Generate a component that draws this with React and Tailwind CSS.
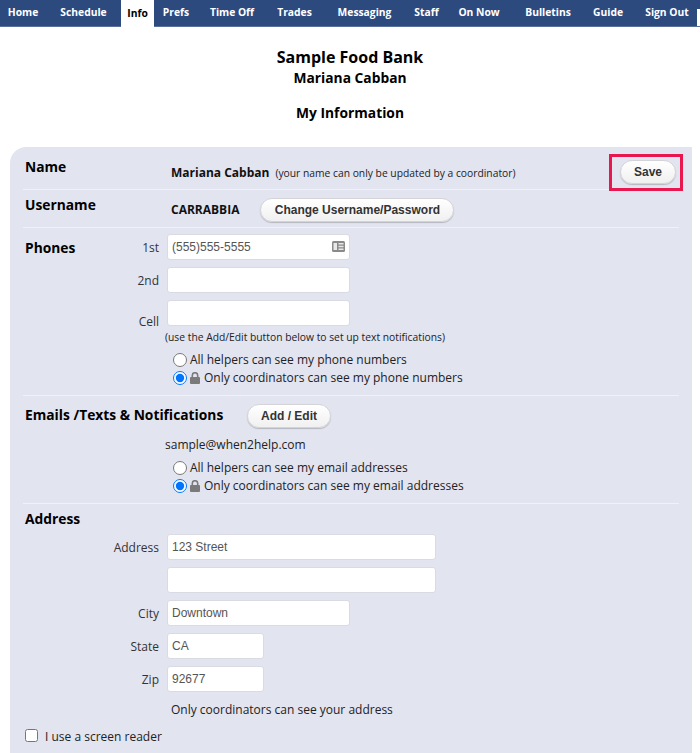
import React from "react";

const NAV = [
  ["Home", "w-[46px]"], ["Schedule", "w-[75px]"], ["Info", "w-[33px]"], ["Prefs", "w-[44px]"], ["Time Off", "w-[68px]"],
  ["Trades", "w-[57px]"], ["Messaging", "w-[83px]"], ["Staff", "w-[41px]"], ["On Now", "w-[64px]"], ["Bulletins", "w-[74px]"],
  ["Guide", "w-[46px]"], ["Sign Out", "w-[66px] pl-[6px]"],
];

function Btn({ children, className = "" }) {
  return (
    <span className={"inline-flex items-center justify-center h-6 rounded-full border border-[#d4d4d8] bg-gradient-to-b from-white to-[#f0f0f0] shadow-[0_1px_1px_rgba(0,0,0,0.2)] font-['Liberation_Sans',sans-serif] font-bold text-[12px] text-[#333] " + className}>
      {children}
    </span>
  );
}

function Field({ label, value, w, icon, labelClass = "pt-[1px]" }) {
  return (
    <div className="flex items-center h-[26px] mb-[7px]">
      <div className={"w-[144px] text-right pr-[8px] text-[#333] " + labelClass}>{label}</div>
      <div className={"relative h-[26px] rounded-[3px] bg-white border border-[#d9dae2] pl-[4px] flex items-center font-['Liberation_Sans',sans-serif] text-[12px] text-[#555] " + w}>
        {value}
        {icon && (
          <svg className="absolute right-[4px] top-[6px]" width="13" height="11" viewBox="0 0 13 11">
            <rect x="0" y="0" width="13" height="11" rx="1.5" fill="#8a8a8a" />
            <rect x="1.5" y="2" width="3.5" height="7" fill="#e8e8e8" />
            <rect x="6.5" y="2" width="5" height="1.5" fill="#e8e8e8" />
            <rect x="6.5" y="4.75" width="5" height="1.5" fill="#e8e8e8" />
            <rect x="6.5" y="7.5" width="5" height="1.5" fill="#e8e8e8" />
          </svg>
        )}
      </div>
    </div>
  );
}

function Lock() {
  return (
    <svg className="ml-[3px] mr-[4px] mb-[1px] shrink-0" width="10" height="12" viewBox="0 0 10 12">
      <path d="M2.3 6V3.4a2.7 2.7 0 0 1 5.4 0V6" fill="none" stroke="#7a7a7a" strokeWidth="1.6" />
      <rect x="0" y="5" width="10" height="7" rx="1" fill="#7a7a7a" />
    </svg>
  );
}

function Radios({ name, noun }) {
  return (
    <div className="ml-[150px]">
      <label className="flex items-center h-[18px]">
        <input type="radio" name={name} className="w-[14px] h-[14px] m-0" />
        <span className="ml-[3px]">All helpers can see my {noun}</span>
      </label>
      <label className="flex items-center h-[18px]">
        <input type="radio" name={name} defaultChecked className="w-[14px] h-[14px] m-0" />
        <span className="flex items-center"><Lock /> Only coordinators can see my {noun}</span>
      </label>
    </div>
  );
}

export default function App() {
  return (
    <div className="h-[753px] overflow-hidden bg-white font-['Open_Sans',sans-serif] text-[12px] text-[#222]">
      <nav className="relative flex h-[27px] bg-[#2d4a7f] pl-0 border-b border-[#5a7099]">
        {NAV.map(([t, w]) => (
          <div key={t} className={"h-[26px] flex items-center justify-center text-[10.3px] font-bold " + w + (t === "Info" ? " bg-white text-black h-[27px]" : " text-white")}>
            {t}
          </div>
        ))}
      </nav>

      <header className="text-center text-black font-bold pt-[19px]">
        <div className="text-[16px] leading-[22px]">Sample Food Bank</div>
        <div className="text-[13.8px] leading-[19px]">Mariana Cabban</div>
        <div className="text-[13.8px] leading-[19px] mt-[16px]">My Information</div>
      </header>

      <main className="relative ml-[10px] mr-[8px] mt-[25px] bg-[#e2e4f0] rounded-tl-[16px] pl-[13px] pr-[13px] pb-[20px]">
        <section className="relative h-[43px] border-b border-[#f1f2f8]">
          <div className="absolute left-[2px] top-[10px] font-bold text-[13.8px] text-black leading-[19px]">Name</div>
          <div className="absolute left-[148px] top-[17px] flex items-baseline">
            <span className="font-bold text-[12px] text-[#111]">Mariana Cabban</span>
            <span className="ml-[6px] text-[10.3px]">(your name can only be updated by a coordinator)</span>
          </div>
          <Btn className="absolute right-[3px] top-[13px] w-[56px]">Save</Btn>
        </section>

        <section className="relative h-[38px] pt-[2px] border-b border-[#f1f2f8] flex items-center">
          <div className="absolute left-[2px] top-[5px] font-bold text-[13.8px] text-black leading-[19px]">Username</div>
          <div className="ml-[148px] font-bold text-[12px] text-[#111]">CARRABBIA</div>
          <Btn className="ml-[21px] w-[194px]">Change Username/Password</Btn>
        </section>

        <section className="relative pt-[6px] h-[168px] border-b border-[#f1f2f8]">
          <div className="absolute left-[2px] top-[10px] font-bold text-[13.8px] text-black leading-[19px]">Phones</div>
          <Field label="1st" value="(555)555-5555" w="w-[183px]" icon />
          <Field label="2nd" w="w-[183px]" labelClass="pt-[2px]" />
          <Field label="Cell" w="w-[183px]" labelClass="pt-[17px]" />
          <div className="ml-[142px] -mt-[3px] text-[10.3px] leading-[14px]">(use the Add/Edit button below to set up text notifications)</div>
          <div className="mt-[7px]">
            <Radios name="phone" noun="phone numbers" />
          </div>
        </section>

        <section className="relative h-[108px] border-b border-[#f1f2f8]">
          <div className="absolute left-[2px] top-[9px] font-bold text-[13.8px] text-black leading-[19px]">Emails /Texts &amp; Notifications</div>
          <Btn className="absolute left-[224px] top-[8px] w-[84px]">Add / Edit</Btn>
          <div className="absolute left-[142px] top-[40px] leading-[18px]">sample@when2help.com</div>
          <div className="absolute left-0 top-[63px]">
            <Radios name="email" noun="email addresses" />
          </div>
        </section>

        <section className="relative pt-[30px]">
          <div className="absolute left-[2px] top-[5px] font-bold text-[13.8px] text-black leading-[19px]">Address</div>
          <Field label="Address" value="123 Street" w="w-[269px]" />
          <Field label="" w="w-[269px]" />
          <Field label="City" value="Downtown" w="w-[183px]" />
          <Field label="State" value="CA" w="w-[97px]" />
          <Field label="Zip" value="92677" w="w-[97px]" />
          <div className="ml-[148px] mt-[9px] leading-[18px]">Only coordinators can see your address</div>
          <label className="flex items-center ml-[2px] mt-[7px] h-[18px]">
            <input type="checkbox" className="w-[13px] h-[13px] m-0" />
            <span className="ml-[7px] pt-[3px]">I use a screen reader</span>
          </label>
        </section>
      </main>

      <div className="absolute left-[609px] top-[154px] w-[74px] h-[37px] border-[3px] border-[#e8174f]" />
      <div className="absolute left-[697px] top-[9px] w-[3px] h-[17px] bg-white" />
    </div>
  );
}
